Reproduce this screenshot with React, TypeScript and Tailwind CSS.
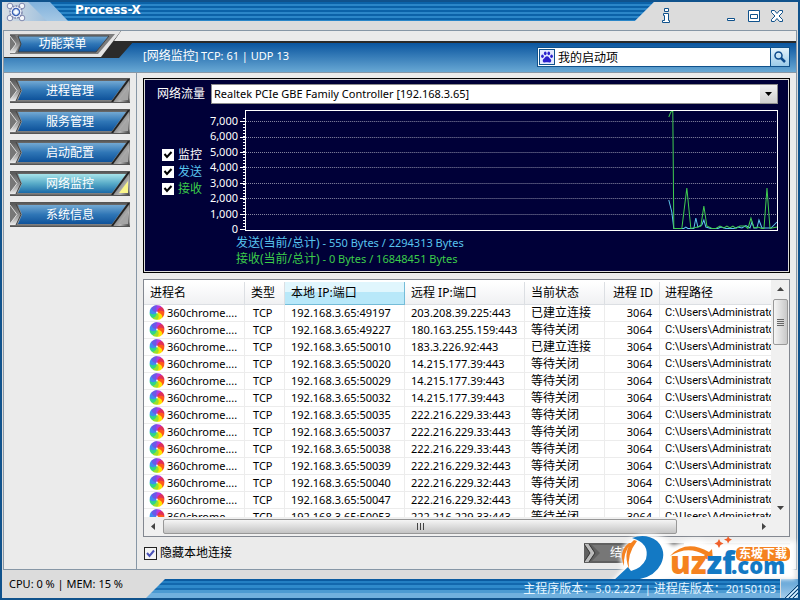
import { useState } from 'react'

const menuItems = ['进程管理', '服务管理', '启动配置', '网络监控', '系统信息']

const connections = [
  { local: '192.168.3.65:49197', remote: '203.208.39.225:443', state: '已建立连接' },
  { local: '192.168.3.65:49227', remote: '180.163.255.159:443', state: '等待关闭' },
  { local: '192.168.3.65:50010', remote: '183.3.226.92:443', state: '已建立连接' },
  { local: '192.168.3.65:50020', remote: '14.215.177.39:443', state: '等待关闭' },
  { local: '192.168.3.65:50029', remote: '14.215.177.39:443', state: '等待关闭' },
  { local: '192.168.3.65:50032', remote: '14.215.177.39:443', state: '等待关闭' },
  { local: '192.168.3.65:50035', remote: '222.216.229.33:443', state: '等待关闭' },
  { local: '192.168.3.65:50037', remote: '222.216.229.33:443', state: '等待关闭' },
  { local: '192.168.3.65:50038', remote: '222.216.229.33:443', state: '等待关闭' },
  { local: '192.168.3.65:50039', remote: '222.216.229.32:443', state: '等待关闭' },
  { local: '192.168.3.65:50040', remote: '222.216.229.32:443', state: '等待关闭' },
  { local: '192.168.3.65:50047', remote: '222.216.229.32:443', state: '等待关闭' },
  { local: '192.168.3.65:50053', remote: '222.216.229.33:443', state: '等待关闭' },
]

const axisLabels = ['7,000', '6,000', '5,000', '4,000', '3,000', '2,000', '1,000', '0']
const gridLines = [11, 27, 42, 57, 73, 88, 104]

const petals = ['#b23be0', '#e0305a', '#ff5a1c', '#ffe400', '#9be22a', '#2fd58a', '#3f8df0', '#6a5ae8']

/* ── Icons ── */

function WheelIcon() {
  return (
    <svg viewBox="0 0 16 16" className="size-4 shrink-0" aria-hidden="true">
      {petals.map((color, i) => (
        <path key={color} d="M8 7.500 C6 5.500 5.500 1.500 8 .2 C11 0 12.800 1.500 13.300 2.700 C11 3 9 5 8 7.500Z" fill={color} transform={`rotate(${i * 45} 8 7.500)`} />
      ))}
      <circle cx="8" cy="7.500" r="1" fill="#fff" fillOpacity=".8" />
    </svg>
  )
}

function GearIcon() {
  return (
    <svg viewBox="0 0 20 20" className="size-5" aria-hidden="true">
      <g fill="#f4f6fb" stroke="#7f88ae" strokeWidth="1">
        <path d="M4 4 L16 16 M16 4 L4 16" strokeWidth="5" />
        <path d="M4 4 L16 16 M16 4 L4 16" stroke="#eef1f8" strokeWidth="3" />
        <circle cx="4" cy="4" r="2.800" />
        <circle cx="16" cy="4" r="2.800" />
        <circle cx="4" cy="16" r="2.800" />
        <circle cx="16" cy="16" r="2.800" />
        <circle cx="10" cy="10" r="6" strokeDasharray="2 1" strokeWidth="1.500" />
        <circle cx="10" cy="10" r="3.500" fill="#cfe0f6" stroke="#3d62b4" strokeWidth="1.500" />
      </g>
      <path d="M10 7.500 v5 M7.500 10 h5" stroke="#fff" strokeWidth="1.500" />
    </svg>
  )
}

function PawIcon() {
  return (
    <svg viewBox="0 0 16 16" className="size-4 shrink-0 border border-[#10528c] bg-[#e4e9ff]" aria-hidden="true">
      <g fill="#2a20cc">
        <ellipse cx="6" cy="3.800" rx="1.500" ry="2.200" />
        <ellipse cx="10" cy="3.800" rx="1.500" ry="2.200" />
        <ellipse cx="2.800" cy="7" rx="1.500" ry="2" />
        <ellipse cx="13.200" cy="7" rx="1.500" ry="2" />
        <path d="M8 7 C10 7 10.500 9 12 10.200 C13.500 11.500 13 14.500 10.500 14.300 C8.500 14 7.500 14 5.500 14.300 C3 14.500 2.500 11.500 4 10.200 C5.500 9 6 7 8 7Z" />
      </g>
    </svg>
  )
}

/* Metal frame with an arrow head on the left and a cut corner on the right */
function PlateFrame({ active }: { active: boolean }) {
  return (
    <svg viewBox="0 0 120 25" preserveAspectRatio="none" className="absolute inset-0 size-full" aria-hidden="true">
      <defs>
        <linearGradient id="plateBlue" x1="0" y1="0" x2="0" y2="1">
          <stop offset="0" stopColor="#73a9d3" />
          <stop offset=".5" stopColor="#2f76b6" />
          <stop offset="1" stopColor="#0e529a" />
        </linearGradient>
        <linearGradient id="plateActive" x1="0" y1="0" x2="0" y2="1">
          <stop offset="0" stopColor="#a8e4ea" />
          <stop offset=".5" stopColor="#58abc8" />
          <stop offset="1" stopColor="#1a6aa8" />
        </linearGradient>
        <linearGradient id="plateMetal" x1="0" y1="0" x2="0" y2="1">
          <stop offset="0" stopColor="#4c4c4c" />
          <stop offset=".25" stopColor="#8c8c8c" />
          <stop offset=".8" stopColor="#a8a8a8" />
          <stop offset="1" stopColor="#555" />
        </linearGradient>
        <linearGradient id="plateArrow" x1="0" y1="0" x2="0" y2="1">
          <stop offset="0" stopColor="#5a5a5a" />
          <stop offset=".5" stopColor="#8a8a8a" />
          <stop offset="1" stopColor="#ededed" />
        </linearGradient>
        <linearGradient id="plateCorner" x1="0" y1="0" x2="1" y2="1">
          <stop offset="0" stopColor="#333" />
          <stop offset=".7" stopColor="#b5b5b5" />
          <stop offset="1" stopColor="#444" />
        </linearGradient>
      </defs>
      <path d="M0 0 H120 V25 H0Z" fill="url(#plateMetal)" />
      <path d="M8 3 H116 L102 22 H8 L12 12.500Z" fill={active ? 'url(#plateActive)' : 'url(#plateBlue)'} />
      <path d="M0 2 H6 L11 12.500 L6 23 H0Z" fill="url(#plateArrow)" />
      <path d="M0 4 L7 12.500 L0 21Z" fill="#777" />
      <path d="M0 3 L7 12.500 L0 22" fill="none" stroke="#ddd" />
      <path d="M6 2 L11 12.500 L6 23" fill="none" stroke="#444" />
      <path d="M119 1 V24 H103Z" fill="url(#plateCorner)" />
      <path d="M118 10 V22 H109Z" fill={active ? '#fbf68a' : '#a4a4a4'} />
      <path d="M119 1 L102 24" stroke="#222" strokeWidth="2" />
      <path d="M0 .5 H120 M0 24.500 H120" stroke="#555" />
    </svg>
  )
}

function NavButton({ label, active, onClick }: { label: string; active: boolean; onClick: () => void }) {
  return (
    <button type="button" onClick={onClick} className="relative h-[25px] w-[120px] pt-px text-xs text-white">
      <PlateFrame active={active} />
      <span className="relative">{label}</span>
    </button>
  )
}

function ActionButton({ label, className }: { label: string; className: string }) {
  return (
    <button type="button" className={`relative h-5 w-[100px] text-xs text-white ${className}`}>
      <svg viewBox="0 0 100 20" className="absolute inset-0 size-full" aria-hidden="true">
        <path d="M0 0 H100 V20 H0Z" fill="#606060" />
        <path d="M8 2 H98 V18 H8 L16 10Z" fill="#777" />
        <path d="M0 1 L6 10 L0 19 L5 19 L11 10 L5 1Z" fill="#bbb" />
        <path d="M0 1 L6 10 L0 19 M5 1 L11 10 L5 19" fill="none" stroke="#333" />
      </svg>
      <span className="relative">{label}</span>
    </button>
  )
}

/* ── Title bar ── */

function TitleBar() {
  return (
    <header className="flex h-[28px] shrink-0 bg-[#dcdcdc]">
      <div className="flex h-[19px] w-[48px] shrink-0 justify-center bg-linear-to-r from-[#d9dfe4] to-[#9bbedd] pr-5">
        <GearIcon />
      </div>
      <div className="-ml-[22px] h-[19px] flex-1 bg-linear-to-b from-[#80b1dc] to-[#a5c8e5] [clip-path:polygon(0_0,100%_0,calc(100%-19px)_100%,19px_100%)]">
        <h1 className="ml-[22px] h-full bg-[repeating-linear-gradient(to_bottom,#0b62a8_0_2px,#2b86c8_2px_4px)] pl-[25px] font-['DejaVu_Sans',sans-serif] text-xs leading-4 font-bold text-white [clip-path:polygon(0_0,100%_0,calc(100%-19px)_100%,18px_100%)]">
          Process-X
        </h1>
      </div>
      <div className="flex w-[144px] items-center justify-end gap-2 pr-[14px] pb-px pl-2">
        <button type="button" aria-label="关于" className="mr-auto">
          <svg width="9" height="15" viewBox="0 0 9 15" fill="#fff" stroke="#10528c">
            <path d="M2.500 .5 h4 v3 h-4Z M1.500 5.500 h5 v7 h1 v2 h-7 v-2 h2 v-5 h-1Z" />
          </svg>
        </button>
        <button type="button" aria-label="最小化">
          <svg width="14" height="14" viewBox="0 0 14 14" fill="#fff" stroke="#10528c">
            <path d="M3.500 9.500 h7 v2 h-7Z" />
          </svg>
        </button>
        <button type="button" aria-label="最大化">
          <svg width="16" height="14" viewBox="0 0 16 14" fill="#fff" stroke="#10528c">
            <path d="M2.500 1.500 h11 v11 h-11Z M4.500 5.500 h7 v4 h-7Z" />
          </svg>
        </button>
        <button type="button" aria-label="关闭">
          <svg width="14" height="14" viewBox="0 0 14 14" fill="#fff" stroke="#10528c">
            <path d="M1.500 1.500 h3 l2.500 3 l2.500 -3 h3 v2 l-3.500 3.500 l3.500 3.500 v2 h-3 l-2.500 -3 l-2.500 3 h-3 v-2 l3.500 -3.500 l-3.500 -3.500Z" />
          </svg>
        </button>
      </div>
    </header>
  )
}

/* ── Menu and search strip ── */

function TopStrip() {
  return (
    <div className="flex h-[42px] shrink-0 border-b border-[#8797a6] bg-[linear-gradient(to_bottom,#ebebeb_0_10px,#2a2a2a_10px_12px,#0a559f_12px,#68a8d4_100%)]">
      <div className="h-[27px] w-[130px] shrink-0 bg-[#2b2b2b] [clip-path:polygon(0_0,117px_0,110px_10px,100%_10px,calc(100%-15px)_100%,0_100%)]">
        <div className="h-[26px] w-[117px] bg-[#e4e4e4] pt-[3px] pl-[6px] [clip-path:polygon(0_0,100%_0,calc(100%-20px)_100%,0_100%)]">
          <button type="button" className="relative block h-5 w-[105px] text-xs text-white">
            <svg viewBox="0 0 105 20" className="absolute inset-0 size-full" aria-hidden="true">
              <path d="M0 0 H105 L88 20 H0Z" fill="#7c7c7c" />
              <path d="M8 2 H99 L86 18 H8 L11 10Z" fill="url(#plateBlue)" stroke="#444" />
              <path d="M0 1 H5 L10 10 L5 19 H0Z" fill="url(#plateArrow)" />
              <path d="M0 3 L6 10 L0 17Z" fill="#777" />
              <path d="M0 2 L6 10 L0 18" fill="none" stroke="#ddd" />
            </svg>
            <span className="relative">功能菜单</span>
          </button>
        </div>
      </div>
      <p className="flex-1 pt-4 pl-[9px] text-[11px] leading-[18px] text-white">
        [<span className="text-xs">网络监控</span>] TCP: 61 | UDP 13
      </p>
      <form className="mt-4 mr-[6px] flex h-5 w-[253px] border border-[#10528c] bg-white" onSubmit={(e) => e.preventDefault()}>
        <span className="flex items-center pl-px">
          <PawIcon />
        </span>
        <input aria-label="搜索" defaultValue="我的启动项" className="min-w-0 flex-1 pt-px pl-[3px] text-xs text-black outline-none" />
        <button type="submit" aria-label="搜索" className="flex w-[19px] items-center justify-center border-l border-[#10528c] bg-linear-to-b from-[#e4f3fc] to-[#9ccbe8]">
          <svg width="12" height="12" viewBox="0 0 12 12" fill="none" stroke="#0c4a8c" strokeWidth="1.500" aria-hidden="true">
            <circle cx="4.500" cy="4.500" r="3.500" />
            <path d="M7 7 L11 11" strokeWidth="2.500" />
          </svg>
        </button>
      </form>
    </div>
  )
}

/* ── Traffic panel ── */

function TrafficCheck({ label, className }: { label: string; className: string }) {
  return (
    <label className={`flex h-[17px] items-center gap-1 text-xs ${className}`}>
      <span className="relative flex size-3">
        <input type="checkbox" defaultChecked className="peer size-3 appearance-none bg-white" />
        <svg viewBox="0 0 12 12" className="pointer-events-none absolute inset-0 hidden peer-checked:block" fill="none" stroke="#000" strokeWidth="2">
          <path d="M2.500 5 L5 8 L9.500 3" />
        </svg>
      </span>
      {label}
    </label>
  )
}

function TrafficChart() {
  return (
    <div className="flex flex-1">
      <div className="flex h-[125px] w-[34px] flex-col justify-between pt-[5px] pr-px text-right text-[11px] leading-3 text-white">
        {axisLabels.map((label) => (
          <span key={label}>{label}</span>
        ))}
      </div>
      <svg width="5" height="121" viewBox="0 0 5 121" stroke="#fff" className="ml-px shrink-0" aria-hidden="true">
        {[...Array(38)].map((_, i) => (
          <path key={i} d={`M3 ${119.5 - i * 3} H5`} />
        ))}
        {[...gridLines, 119].map((y) => (
          <path key={y} d={`M0 ${y + 0.5} H5`} />
        ))}
      </svg>
      <svg viewBox="0 0 532 121" preserveAspectRatio="none" className="h-[121px] min-w-0 flex-1 bg-[#000038]" fill="none" role="img" aria-label="网络流量">
        {gridLines.map((y) => (
          <path key={y} d={`M1 ${y + 0.5} H531`} stroke="#8a8aa6" strokeDasharray="1 1" />
        ))}
        <path
          d="M423 90 L426 102 L428 118.500 H438 L440 117 L442 118.500 H448 L450 108 L452 117 L456 115 L458 110 L460 117 L465 118.500 H472 L475 117 L480 118.500 H488 L492 117 L496 118 L500 115.500 L504 118 L506 112 L508 118 H511 L513 110 L516 118 H525 L531 112"
          stroke="#5fc8f0"
        />
        <path
          d="M423 7 L425 2 L427 1 L428 118.500 H436 L441 78 L445 118.500 L452 117 L455 116 L458 96 L461 116 L466 118.500 H470 L474 116 L478 118 L481 116 L484 118 L487 116 L490 118.500 L494 116 L499 116 L502 118.500 L505 108 L508 118 L512 117 L516 118.500 H518 L521 78 L524 118.500 L531 117"
          stroke="#40cc50"
        />
        <path d="M.5 .5 H531.500 V120.500 H.5Z" stroke="#fff" />
      </svg>
    </div>
  )
}

function TrafficPanel() {
  return (
    <section className="border border-black">
      <div className="border border-[#dcdcdc] bg-[#000038] pt-1 pr-[10px] pb-[4px] pl-[12px]">
        <div className="flex items-center">
          <label htmlFor="adapter" className="w-[54px] text-xs text-white">
            网络流量
          </label>
          <div className="relative flex h-5 flex-1">
            <select id="adapter" className="h-5 w-full appearance-none border border-[#8d8d8d] bg-white pl-[2px] text-[11px] text-black">
              <option>Realtek PCIe GBE Family Controller [192.168.3.65]</option>
            </select>
            <span className="pointer-events-none absolute top-px right-px flex h-[18px] w-[17px] items-center justify-center bg-linear-to-b from-[#f2f2f2] to-[#cfcfcf]">
              <svg width="7" height="4" viewBox="0 0 7 4" aria-hidden="true">
                <path d="M0 0 H7 L3.500 4Z" />
              </svg>
            </span>
          </div>
        </div>
        <div className="mt-[6px] flex">
          <div className="flex w-[48px] shrink-0 flex-col pt-9 pl-[5px]">
            <TrafficCheck label="监控" className="text-white" />
            <TrafficCheck label="发送" className="text-[#58c4ee]" />
            <TrafficCheck label="接收" className="text-[#3ccc4a]" />
          </div>
          <TrafficChart />
        </div>
        <div className="pl-[79px] text-[11px] leading-4">
          <p className="text-[#58c4ee]">
            <span className="text-xs leading-4">发送(当前/总计)</span> - 550 Bytes / 2294313 Bytes
          </p>
          <p className="text-[#3ccc4a]">
            <span className="text-xs leading-4">接收(当前/总计)</span> - 0 Bytes / 16848451 Bytes
          </p>
        </div>
      </div>
    </section>
  )
}

/* ── Connection list ── */

const headCell = 'border-r border-b border-[#dcdfe3] pl-[6px] text-left font-normal bg-linear-to-b from-white to-[#f0f1f3]'
const bodyCell = 'border-r border-b border-[#ececec] pl-[6px]'

function ConnectionTable() {
  return (
    <section className="flex min-h-0 flex-1 flex-col border border-[#828790] bg-white">
      <div className="flex min-h-0 flex-1">
        <div className="min-w-0 flex-1 overflow-hidden pt-[2px]">
          <table className="w-full table-fixed border-separate border-spacing-0 text-[11px] whitespace-nowrap text-black">
            <colgroup>
              <col className="w-[101px]" />
              <col className="w-[40px]" />
              <col className="w-[120px]" />
              <col className="w-[120px]" />
              <col className="w-[80px]" />
              <col className="w-[55px]" />
              <col />
            </colgroup>
            <thead>
              <tr className="h-[23px] text-xs">
                <th className={headCell}>进程名</th>
                <th className={headCell}>类型</th>
                <th className="border-r border-b border-[#74bcd8] bg-[linear-gradient(to_bottom,#e0f6fd_0_45%,#b8e8f9_45%_100%)] pl-[6px] text-left font-normal">本地 IP:端口</th>
                <th className={headCell}>远程 IP:端口</th>
                <th className={headCell}>当前状态</th>
                <th className="border-r border-b border-[#dcdfe3] bg-linear-to-b from-white to-[#f0f1f3] pr-[6px] text-right font-normal">进程 ID</th>
                <th className="border-b border-[#dcdfe3] bg-linear-to-b from-white to-[#f0f1f3] pl-[5px] text-left font-normal">进程路径</th>
              </tr>
            </thead>
            <tbody>
              {connections.map((row) => (
                <tr key={row.local} className="h-[17px] leading-4">
                  <td className="border-r border-b border-[#ececec] pl-[5px]">
                    <span className="flex h-4 items-center gap-[2px]">
                      <WheelIcon />
                      360chrome....
                    </span>
                  </td>
                  <td className="border-r border-b border-[#ececec] pl-2">TCP</td>
                  <td className={bodyCell}>{row.local}</td>
                  <td className={bodyCell}>{row.remote}</td>
                  <td className={bodyCell}>
                    <span className="block h-4 text-xs leading-4">{row.state}</span>
                  </td>
                  <td className="border-r border-b border-[#ececec] pr-[7px] text-right">3064</td>
                  <td className="overflow-hidden border-b border-[#ececec] pl-[5px] font-['Roboto',sans-serif]">C:\Users\Administrato</td>
                </tr>
              ))}
            </tbody>
          </table>
        </div>
        <div className="flex w-[18px] shrink-0 flex-col items-center bg-[#f0f0f0] py-[7px]">
          <svg width="7" height="4" viewBox="0 0 7 4" fill="#444" aria-hidden="true">
            <path d="M3.500 0 L7 4 H0Z" />
          </svg>
          <div className="mt-2 flex h-[46px] w-[15px] flex-col items-center justify-center gap-px rounded-xs border border-[#989898] bg-linear-to-r from-[#f5f5f5] to-[#c8c8c8]">
            {[...Array(4)].map((_, i) => (
              <span key={i} className="h-px w-[7px] bg-[#666]" />
            ))}
          </div>
          <svg width="7" height="4" viewBox="0 0 7 4" fill="#444" className="mt-auto" aria-hidden="true">
            <path d="M0 0 H7 L3.500 4Z" />
          </svg>
        </div>
      </div>
      <div className="flex h-[19px] shrink-0 items-center bg-[#f0f0f0] pr-[23px] pl-[7px]">
        <svg width="4" height="7" viewBox="0 0 4 7" fill="#444" aria-hidden="true">
          <path d="M4 0 V7 L0 3.500Z" />
        </svg>
        <div className="flex flex-1 px-2">
          <div className="flex h-[15px] w-[87%] items-center justify-center gap-[2px] rounded-xs border border-[#989898] bg-linear-to-b from-[#f5f5f5] to-[#c4c4c4]">
            {[...Array(3)].map((_, i) => (
              <span key={i} className="h-[7px] w-px bg-[#444]" />
            ))}
          </div>
        </div>
        <svg width="4" height="7" viewBox="0 0 4 7" fill="#444" aria-hidden="true">
          <path d="M0 0 V7 L4 3.500Z" />
        </svg>
      </div>
    </section>
  )
}

/* ── Download site badge over the lower right corner ── */

function SiteBadge() {
  return (
    <div className="pointer-events-none absolute right-0 bottom-2 h-[54px] w-[188px]">
      <svg viewBox="0 0 188 54" className="size-full overflow-visible" aria-hidden="true">
        <defs>
          <filter id="badgeGlow" x="-20%" y="-30%" width="140%" height="160%">
            <feGaussianBlur stdDeviation="2" />
          </filter>
        </defs>
        <path d="M6 46 L16 34 Q8 8 32 2 Q52 0 62 14 Q80 4 98 9 H182 V40 H66 Q44 42 30 46 Z" fill="#fff" stroke="#fff" strokeWidth="7" filter="url(#badgeGlow)" />
        <path d="M22 2 Q36 -3 47 5 Q57 15 51 28 Q45 40 30 43 L33 47 L3 45 L18 31 L21 35 Q32 32 36 23 Q40 7 22 2Z" fill="#1379c4" />
        <path d="M24 4 Q12 14 19 33 Q17 18 27 5Z M19 7 Q8 15 14 30 Q13 17 21 7Z" fill="#f5821f" />
        <path d="M60 20 Q76 3 99 16 L102 13 L103 24 L91 22 L95 19 Q78 9 60 20Z" fill="#f5821f" />
        <path d="M109 3 l1.500 3 3 1.500 -3 1.500 -1.500 3 -1.500 -3 -3 -1.500 3 -1.500Z M118 0 l1.500 2.500 2.500 1 -2.500 1.500 -1.500 2.500 -1 -2.500 -3 -1.500 3 -1Z" fill="#f0602a" />
        <g fontFamily="Open Sans, sans-serif" fontWeight="800">
          <text x="60" y="38" fontSize="31" fill="#f5821f">
            uz<tspan fill="#1379c4">zf</tspan>
          </text>
          <text x="121" y="38" fontSize="22" fill="#1379c4">
            .com
          </text>
        </g>
        <rect x="126" y="11" width="54" height="14" rx="5" fill="#f5821f" />
        <text x="129" y="22" fontSize="12" fontWeight="700" fill="#fff" fontFamily="Noto Sans CJK SC, sans-serif">
          东坡下载
        </text>
      </svg>
    </div>
  )
}

export default function App() {
  const [current, setCurrent] = useState('网络监控')

  return (
    <div className="relative flex h-screen flex-col overflow-hidden border-2 border-[#10528c] bg-[#dcdcdc] font-['Noto_Sans','Noto_Sans_CJK_SC',sans-serif]">
      <TitleBar />

      <div className="mx-px flex min-h-0 flex-1 flex-col border border-[#8797a6] bg-[#ebebeb]">
        <TopStrip />
        <div className="flex min-h-0 flex-1">
          <nav className="flex w-[133px] shrink-0 flex-col gap-[6px] border-r border-[#8797a6] pt-[5px] pl-[6px]">
            {menuItems.map((label) => (
              <NavButton key={label} label={label} active={label === current} onClick={() => setCurrent(label)} />
            ))}
          </nav>

          <main className="flex min-w-0 flex-1 flex-col pt-[5px] pr-[6px] pl-[6px]">
            <TrafficPanel />
            <div className="mt-[6px] flex min-h-0 flex-1">
              <ConnectionTable />
            </div>
            <div className="flex h-8 shrink-0 items-center">
              <label className="flex items-center gap-[3px] pl-px text-xs text-black">
                <span className="relative flex size-[13px]">
                  <input type="checkbox" defaultChecked className="peer size-[13px] appearance-none border border-[#222] bg-[#f4f4f4]" />
                  <svg viewBox="0 0 13 13" className="pointer-events-none absolute inset-0 hidden peer-checked:block" fill="none" stroke="#4a52b8" strokeWidth="2">
                    <path d="M3 6 L5.500 9 L10 3.500" />
                  </svg>
                </span>
                隐藏本地连接
              </label>
              <ActionButton label="结束进程" className="ml-auto" />
              <ActionButton label="刷新" className="ml-[6px] opacity-40" />
            </div>
          </main>
        </div>
      </div>

      <footer className="flex h-[28px] shrink-0 items-end text-[11px]">
        <p className="w-[144px] shrink-0 self-center pl-[7px] text-black">CPU: 0 % | MEM: 15 %</p>
        <div className="relative z-10 flex h-[19px] flex-1 items-center justify-end bg-[linear-gradient(to_bottom,#0b5ba0_0_2px,#2480c4_2px_4px,#1268ae_4px_6px,#2f8acb_6px_9px,#1a70b4_9px_11px,#4b9ad2_11px_14px,#70b0de_14px_100%)] pt-px pr-1 text-[#e8f6ff] [clip-path:polygon(19px_0,100%_0,100%_100%,0_100%)]">
          <span className="text-xs">主程序版本：</span>5.0.2.227 |&nbsp;<span className="text-xs">进程库版本：</span>20150103
        </div>
        <div className="ml-px flex h-[19px] w-[17px] items-end justify-end bg-linear-to-b from-[#5a9fd4] to-[#a4cdec]">
          <svg width="14" height="14" viewBox="0 0 14 14" stroke="#10406c" aria-hidden="true">
            <path d="M1 14 L14 1 M5 14 L14 5 M9 14 L14 9" />
            <path d="M3 14 L14 3 M7 14 L14 7 M11 14 L14 11" stroke="#e4f2fc" />
          </svg>
        </div>
      </footer>

      <SiteBadge />
    </div>
  )
}
